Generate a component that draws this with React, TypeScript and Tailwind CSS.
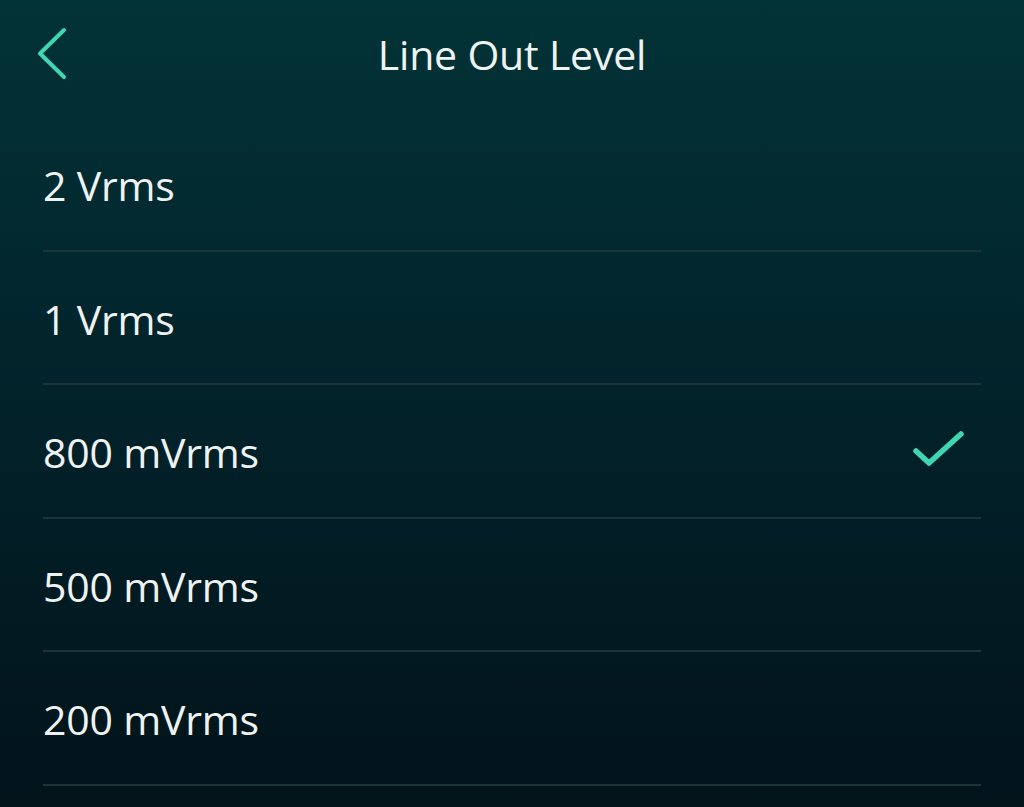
const levels = ['2 Vrms', '1 Vrms', '800 mVrms', '500 mVrms', '200 mVrms']
const selected = '800 mVrms'

export default function App() {
  return (
    <div className="w-[1024px] h-[807px] overflow-hidden bg-gradient-to-b from-[#023337] via-[#02222a] to-[#02131a] text-[#eef3f2] font-['Open_Sans',sans-serif]">
      <div className="relative h-[118px] flex items-start justify-center pt-[22px]">
        <button className="absolute left-[34px] top-[26px] text-[#3fd6b1]">
          <svg width="36" height="56" viewBox="0 0 36 56" fill="none" stroke="currentColor" strokeWidth={4} strokeLinecap="round" strokeLinejoin="round">
            <path d="M30 4L6 27.5L30 51" />
          </svg>
        </button>
        <h1 className="text-[41px] leading-[64px] tracking-[-0.2px]">Line Out Level</h1>
      </div>
      <ul className="px-[43px]">
        {levels.map((l) => (
          <li key={l} className="h-[131.5px] box-content border-b-2 border-[#1b3438] flex items-center justify-between">
            <span className="text-[41px] tracking-[-0.2px] pt-[4px]">{l}</span>
            {l === selected && (
              <svg width="60" height="44" viewBox="0 0 60 44" fill="none" stroke="#3fd6b1" strokeWidth={5.5} strokeLinecap="round" strokeLinejoin="round" className="mr-[10px]">
                <path d="M5 22L18 34L50 5" />
              </svg>
            )}
          </li>
        ))}
      </ul>
    </div>
  )
}
